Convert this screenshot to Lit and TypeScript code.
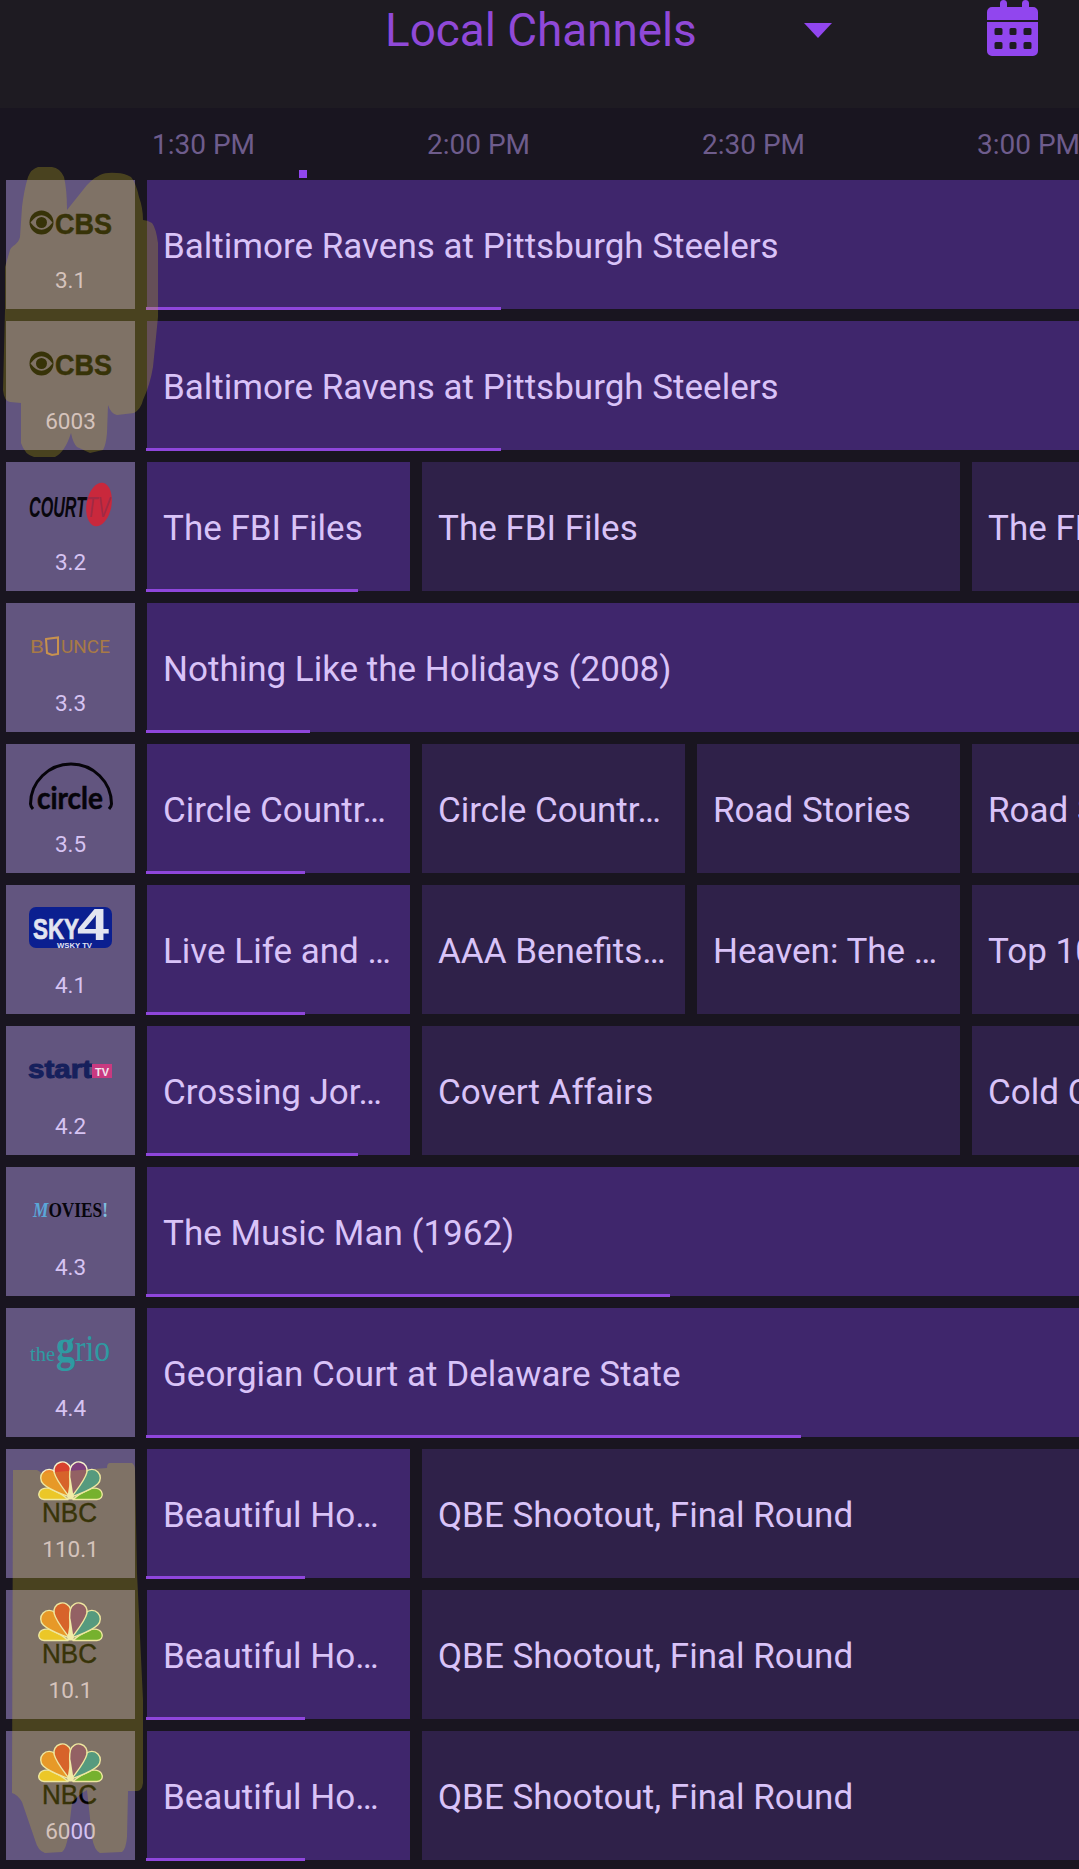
import { LitElement, css, html, svg } from 'lit';
import { customElement } from 'lit/decorators.js';

const SLOT = 275;
const GAP = 12;

type Program = { title: string; slots: number; progress?: number };
type Channel = { logo: string; num: string; programs: Program[] };

const cell = '#62557f';

const cbs = svg`
  <circle cx="35.5" cy="42.5" r="12" fill="#000" />
  <path d="M24.5 42.5 Q35.5 28 46.5 42.5 Q35.5 57 24.5 42.5Z" fill="${cell}" />
  <circle cx="35.5" cy="42.5" r="5.5" fill="#000" />
  <text x="49" y="53.5" font-family="'Liberation Sans', sans-serif" font-weight="700" font-size="29" textLength="57" lengthAdjust="spacingAndGlyphs" stroke="#000" stroke-width=".5" fill="#000">CBS</text>
`;

const court = svg`
  <ellipse cx="93" cy="42.5" rx="12.5" ry="22" transform="rotate(10 93 42.5)" fill="#c9283c" />
  <text x="23" y="55" font-family="'Liberation Sans', sans-serif" font-weight="700" font-style="italic" font-size="30" textLength="57" lengthAdjust="spacingAndGlyphs" fill="#08060c">COURT</text>
  <text x="80" y="55" font-family="'Liberation Sans', sans-serif" font-style="italic" font-size="30" textLength="24" lengthAdjust="spacingAndGlyphs" fill="#a02a45">TV</text>
`;

const bounce = svg`
  <text x="24" y="50" font-family="Roboto, sans-serif" font-size="18" textLength="14" lengthAdjust="spacingAndGlyphs" fill="#a87a46">B</text>
  <path d="M40 36 L52 34.5 V51 L46 52 L41 50Z" fill="none" stroke="#c8924e" stroke-width="2" />
  <text x="55" y="50" font-family="Roboto, sans-serif" font-size="18" textLength="49" lengthAdjust="spacingAndGlyphs" fill="#a87a46">UNCE</text>
`;

const circle = svg`
  <path d="M27 65 C24.5 62 24.5 61 24.5 60 A40.5 40 0 0 1 105.5 60 C105.5 61 105.5 62 103 65" fill="none" stroke="#06040a" stroke-width="3" />
  <text x="31" y="65" font-family="Lato, sans-serif" font-weight="700" font-size="30" textLength="66" lengthAdjust="spacingAndGlyphs" stroke="#06040a" stroke-width=".5" fill="#06040a">circle</text>
`;

const sky = svg`
  <rect x="23" y="22" width="83" height="41" rx="7" fill="#0b1f90" />
  <text x="27" y="54" font-family="'Liberation Sans', sans-serif" font-weight="700" font-size="29" textLength="46" lengthAdjust="spacingAndGlyphs" stroke="#e2e4f0" stroke-width=".7" fill="#e2e4f0">SKY</text>
  <text x="71" y="55" font-family="'Liberation Sans', sans-serif" font-weight="700" font-size="44" textLength="32" lengthAdjust="spacingAndGlyphs" fill="#e2e4f0">4</text>
  <text x="51" y="62.5" font-family="'Liberation Sans', sans-serif" font-weight="700" font-size="8" textLength="35" lengthAdjust="spacingAndGlyphs" fill="#e2e4f0">WSKY TV</text>
`;

const start = svg`
  <text x="22" y="52" font-family="'Liberation Sans', sans-serif" font-weight="700" font-size="25" textLength="64" lengthAdjust="spacingAndGlyphs" stroke="#16205c" stroke-width="1" fill="#16205c">start</text>
  <rect x="86" y="38" width="20" height="14" fill="#c93a80" />
  <text x="89" y="49.5" font-family="'Liberation Sans', sans-serif" font-weight="700" font-size="11" textLength="14" lengthAdjust="spacingAndGlyphs" fill="#f3e6ef">TV</text>
`;

const movies = svg`
  <text x="27" y="50" font-family="'Liberation Serif', serif" font-weight="700" font-size="20" textLength="75" lengthAdjust="spacingAndGlyphs">
    <tspan fill="#5aa7d8" font-style="italic">M</tspan><tspan fill="#07050c">OVIES</tspan><tspan fill="#7fbfe0">!</tspan>
  </text>
`;

const grio = svg`
  <text x="24" y="53" font-family="'Liberation Serif', serif" font-size="20" textLength="25" lengthAdjust="spacingAndGlyphs" fill="#2f9aa2">the</text>
  <text x="50" y="53" font-family="'Liberation Serif', serif" font-size="38" textLength="54" lengthAdjust="spacingAndGlyphs" fill="#2f9aa2"><tspan font-weight="700" font-size="46">g</tspan>rio</text>
`;

const feather = 'M0 0 C-3 -8 -8.5 -19 -8.5 -27.5 A8.5 8.5 0 0 1 8.5 -27.5 C8.5 -19 3 -8 0 0Z';

const nbc = svg`
  <g transform="translate(32 12)" stroke="#f8f4cc" stroke-width="1.4" stroke-linejoin="round">
    <path d="M30 38.5 H6 C2 38.5 0 35 1 32 C2.5 27 9 26 14 28.5 C20 31 27 35.5 30 38.5Z" fill="#f3c82c" />
    <path d="M35 38.5 H59 C63 38.5 65 35 64 32 C62.5 27 56 26 51 28.5 C45 31 38 35.5 35 38.5Z" fill="#55ab34" />
    <path transform="translate(31 36) rotate(-46)" d="${feather}" fill="#ee8a2c" />
    <path transform="translate(34 36) rotate(46)" d="${feather}" fill="#2a8ba0" />
    <path transform="translate(31.5 36) rotate(-15)" d="${feather}" fill="#d8412e" />
    <path transform="translate(33.5 36) rotate(15)" d="${feather}" fill="#7d3f7c" />
    <path d="M32.5 16 L36 38.5 H29Z" fill="#fbf8d6" stroke="none" />
  </g>
  <text x="36" y="73" font-family="'Liberation Sans', sans-serif" font-size="27" textLength="55" lengthAdjust="spacingAndGlyphs" stroke="#000" stroke-width=".4" fill="#000">NBC</text>
`;

const logos: Record<string, unknown> = { cbs, court, bounce, circle, sky, start, movies, grio, nbc };

const ravens = 'Baltimore Ravens at Pittsburgh Steelers';
const beautiful: Program[] = [
  { title: 'Beautiful Ho…', slots: 1, progress: 159 },
  { title: 'QBE Shootout, Final Round', slots: 3 },
];

const channels: Channel[] = [
  { logo: 'cbs', num: '3.1', programs: [{ title: ravens, slots: 4, progress: 355 }] },
  { logo: 'cbs', num: '6003', programs: [{ title: ravens, slots: 4, progress: 355 }] },
  { logo: 'court', num: '3.2', programs: [
    { title: 'The FBI Files', slots: 1, progress: 212 },
    { title: 'The FBI Files', slots: 2 },
    { title: 'The FBI Files', slots: 1 },
  ] },
  { logo: 'bounce', num: '3.3', programs: [{ title: 'Nothing Like the Holidays (2008)', slots: 4, progress: 164 }] },
  { logo: 'circle', num: '3.5', programs: [
    { title: 'Circle Countr…', slots: 1, progress: 159 },
    { title: 'Circle Countr…', slots: 1 },
    { title: 'Road Stories', slots: 1 },
    { title: 'Road Stories', slots: 1 },
  ] },
  { logo: 'sky', num: '4.1', programs: [
    { title: 'Live Life and …', slots: 1, progress: 159 },
    { title: 'AAA Benefits…', slots: 1 },
    { title: 'Heaven: The …', slots: 1 },
    { title: 'Top 10', slots: 1 },
  ] },
  { logo: 'start', num: '4.2', programs: [
    { title: 'Crossing Jor…', slots: 1, progress: 212 },
    { title: 'Covert Affairs', slots: 2 },
    { title: 'Cold Case', slots: 1 },
  ] },
  { logo: 'movies', num: '4.3', programs: [{ title: 'The Music Man (1962)', slots: 4, progress: 524 }] },
  { logo: 'grio', num: '4.4', programs: [{ title: 'Georgian Court at Delaware State', slots: 4, progress: 655 }] },
  { logo: 'nbc', num: '110.1', programs: beautiful },
  { logo: 'nbc', num: '10.1', programs: beautiful },
  { logo: 'nbc', num: '6000', programs: beautiful },
];

const times = ['1:30 PM', '2:00 PM', '2:30 PM', '3:00 PM'];

@customElement('app-root')
export class AppRoot extends LitElement {
  static styles = css`
    :host {
      display: block;
      position: relative;
      width: 1079px;
      height: 1869px;
      overflow: hidden;
      background: #191520;
      font-family: Roboto, sans-serif;
    }
    .header {
      display: flex;
      height: 108px;
      padding-left: 385px;
      box-sizing: border-box;
      background: #1e1b22;
    }
    .title {
      width: 419px;
      margin-top: 4px;
      font-size: 45.8px;
      line-height: 54px;
      height: 54px;
      color: #9049d8;
    }
    .arrow {
      width: 28px;
      height: 15px;
      margin-top: 23px;
      background: #9146ee;
      clip-path: polygon(0 0, 100% 0, 50% 100%);
    }
    .calendar {
      width: 51px;
      height: 56px;
      margin-left: 155px;
    }
    .times {
      position: relative;
      display: flex;
      height: 72px;
      padding-left: 152px;
    }
    .time {
      flex: none;
      width: 275px;
      height: 72px;
      font-size: 28px;
      line-height: 74px;
      color: #6e5c8c;
    }
    .now-tick {
      position: absolute;
      left: 299px;
      top: 62px;
      width: 8px;
      height: 8px;
      background: #9146ee;
    }
    .rows {
      display: flex;
      flex-direction: column;
      gap: 12px;
    }
    .row {
      display: flex;
      height: 129px;
      padding-left: 6px;
    }
    .channel {
      flex: none;
      width: 129px;
      height: 129px;
      margin-right: 12px;
      background: #62557f;
    }
    .logo {
      display: block;
      width: 129px;
      height: 84px;
    }
    .num {
      font-size: 22.5px;
      line-height: 32px;
      text-align: center;
      color: #d6c3f2;
    }
    .programs {
      display: flex;
      gap: 12px;
    }
    .program {
      position: relative;
      flex: none;
      box-sizing: border-box;
      height: 129px;
      padding-left: 16px;
      background: #2f2149;
      color: #d9c3f8;
      font-size: 35px;
      line-height: 133px;
      white-space: nowrap;
    }
    .program.current {
      background: #3f266c;
    }
    .progress {
      position: absolute;
      left: -1px;
      bottom: -1px;
      height: 3px;
      background: #8f46dc;
    }
    .marker {
      position: absolute;
      left: 0;
      top: 0;
      width: 1079px;
      height: 1869px;
      pointer-events: none;
    }
  `;

  renderProgram(p: Program) {
    const width = p.slots * SLOT - GAP;
    return html`
      <div class="program ${p.progress ? 'current' : ''}" style="width:${width}px">
        ${p.title}
        ${p.progress ? html`<div class="progress" style="width:${p.progress}px"></div>` : ''}
      </div>
    `;
  }

  render() {
    return html`
      <div class="header">
        <div class="title">Local Channels</div>
        <div class="arrow"></div>
        <svg class="calendar" viewBox="0 0 51 56">
          <path fill="#9146ee" fill-rule="evenodd" d="M13 7 V3.5 A3.5 3.5 0 0 1 20 3.5 V7 H35 V3.5 A3.5 3.5 0 0 1 42 3.5 V7 H46 A5 5 0 0 1 51 12 V20 H0 V12 A5 5 0 0 1 5 7Z M0 22 H51 V51 A5 5 0 0 1 46 56 H5 A5 5 0 0 1 0 51Z
            M9 28 h5 a1.5 1.5 0 0 1 1.5 1.5 v4 a1.5 1.5 0 0 1 -1.5 1.5 h-5 a1.5 1.5 0 0 1 -1.5 -1.5 v-4 a1.5 1.5 0 0 1 1.5 -1.5Z
            M24 28 h4 a1.5 1.5 0 0 1 1.5 1.5 v4 a1.5 1.5 0 0 1 -1.5 1.5 h-4 a1.5 1.5 0 0 1 -1.5 -1.5 v-4 a1.5 1.5 0 0 1 1.5 -1.5Z
            M38 28 h5 a1.5 1.5 0 0 1 1.5 1.5 v4 a1.5 1.5 0 0 1 -1.5 1.5 h-5 a1.5 1.5 0 0 1 -1.5 -1.5 v-4 a1.5 1.5 0 0 1 1.5 -1.5Z
            M9 42 h5 a1.5 1.5 0 0 1 1.5 1.5 v4 a1.5 1.5 0 0 1 -1.5 1.5 h-5 a1.5 1.5 0 0 1 -1.5 -1.5 v-4 a1.5 1.5 0 0 1 1.5 -1.5Z
            M24 42 h4 a1.5 1.5 0 0 1 1.5 1.5 v4 a1.5 1.5 0 0 1 -1.5 1.5 h-4 a1.5 1.5 0 0 1 -1.5 -1.5 v-4 a1.5 1.5 0 0 1 1.5 -1.5Z
            M38 42 h5 a1.5 1.5 0 0 1 1.5 1.5 v4 a1.5 1.5 0 0 1 -1.5 1.5 h-5 a1.5 1.5 0 0 1 -1.5 -1.5 v-4 a1.5 1.5 0 0 1 1.5 -1.5Z" />
        </svg>
      </div>
      <div class="times">
        ${times.map((t) => html`<div class="time">${t}</div>`)}
        <div class="now-tick"></div>
      </div>
      <div class="rows">
        ${channels.map((c) => html`
          <div class="row">
            <div class="channel">
              <svg class="logo" viewBox="0 0 129 84">${logos[c.logo]}</svg>
              <div class="num">${c.num}</div>
            </div>
            <div class="programs">${c.programs.map((p) => this.renderProgram(p))}</div>
          </div>
        `)}
      </div>
      <svg class="marker" viewBox="0 0 1079 1869">
        <path fill="rgb(212,198,30)" fill-opacity=".26" d="M20 237 C18 245 12 245 10 250 L5 267 L5 310 L3 390 Q4 401 10 402 L21 403 L21 443 Q25 455 34 457 L55 457 Q65 452 71 433 Q73 443 77 447 L90 453 L103 450 Q106 445 107 433 L108 405 Q111 414 117 415 L134 413 Q141 409 143 400 Q150 385 153 367 L158 317 L158 243 Q156 228 152 223 Q147 220 143 220 Q143 208 139 197 Q136 183 131 177 Q124 173 117 173 Q106 172 100 175 Q90 180 83 190 L67 210 Q67 190 64 177 Q60 168 52 167 L38 167 Q31 169 28 177 Q24 190 22 207Z" />
        <path fill="rgb(212,198,30)" fill-opacity=".26" d="M13 1470 L37 1470 L42 1473 L107 1468 Q107 1463 110 1463 L132 1463 Q135 1465 135 1470 L137 1573 L143 1700 L143 1783 Q142 1791 137 1791 L128 1791 L127 1837 Q126 1849 122 1852 L100 1853 Q94 1850 92 1837 L87 1790 Q78 1795 72 1803 L68 1837 Q66 1849 62 1852 L45 1853 Q38 1851 35 1840 L22 1802 Q18 1795 12 1793Z" />
      </svg>
    `;
  }
}
